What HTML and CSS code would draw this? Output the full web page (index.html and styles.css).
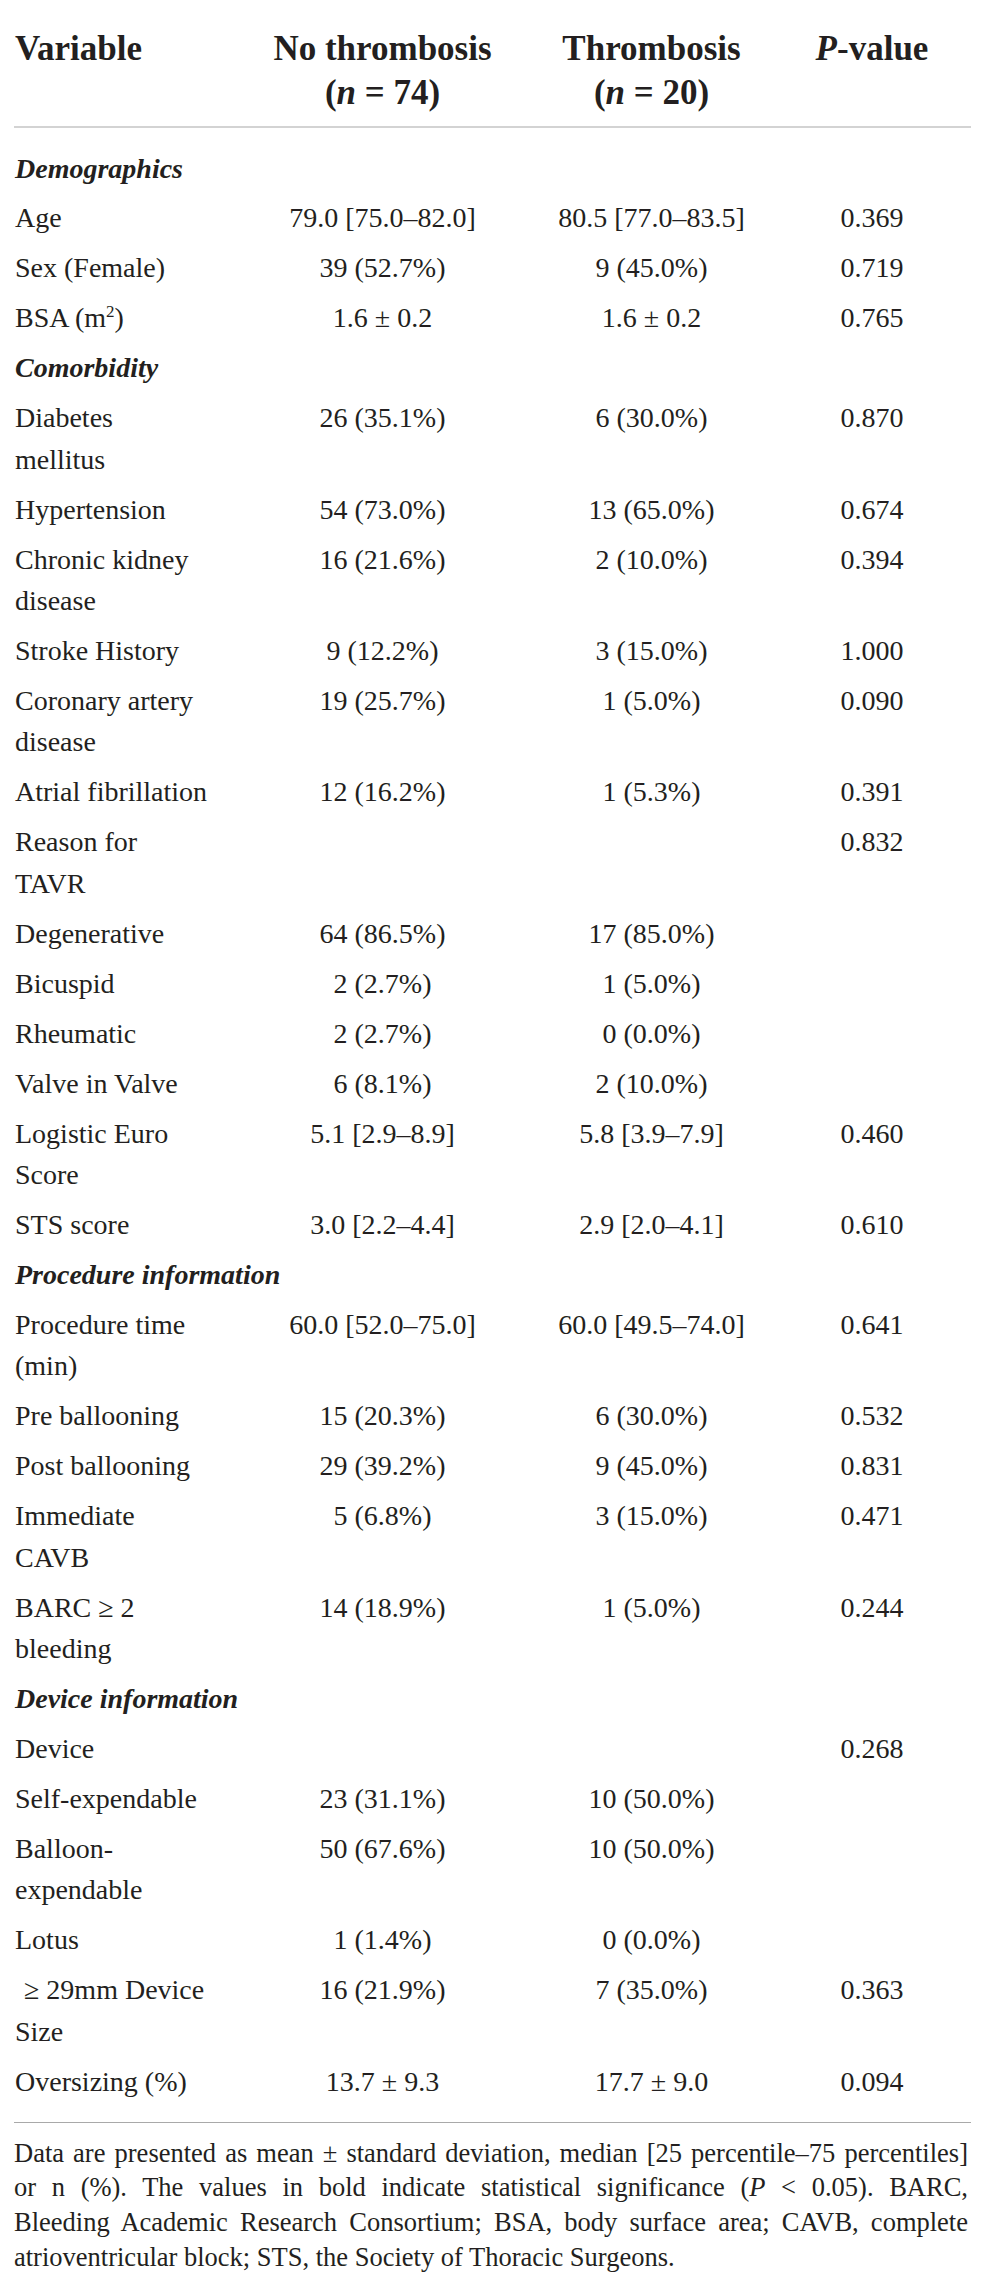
FILE: index.html
```html
<!DOCTYPE html>
<html>
<head>
    <meta charset="utf-8">
    <title>Thrombosis table</title>
    <link rel="stylesheet" href="styles.css">
</head>
<body>
    <div class="page">
        <table class="tabell">
            <colgroup>
                <col class="c1"><col class="c2"><col class="c3"><col class="c4">
            </colgroup>
            <thead>
                <tr>
                    <th class="venstre">Variable</th>
                    <th>No thrombosis<br>(<i>n</i> = 74)</th>
                    <th>Thrombosis<br>(<i>n</i> = 20)</th>
                    <th><i>P</i>-value</th>
                </tr>
            </thead>
            <tbody>
                <tr class="seksjon"><td colspan="4">Demographics</td></tr>
                <tr><td>Age</td><td>79.0 [75.0–82.0]</td><td>80.5 [77.0–83.5]</td><td>0.369</td></tr>
                <tr><td>Sex (Female)</td><td>39 (52.7%)</td><td>9 (45.0%)</td><td>0.719</td></tr>
                <tr><td>BSA (m<sup>2</sup>)</td><td>1.6 ± 0.2</td><td>1.6 ± 0.2</td><td>0.765</td></tr>
                <tr class="seksjon"><td colspan="4">Comorbidity</td></tr>
                <tr><td>Diabetes<br>mellitus</td><td>26 (35.1%)</td><td>6 (30.0%)</td><td>0.870</td></tr>
                <tr><td>Hypertension</td><td>54 (73.0%)</td><td>13 (65.0%)</td><td>0.674</td></tr>
                <tr><td>Chronic kidney<br>disease</td><td>16 (21.6%)</td><td>2 (10.0%)</td><td>0.394</td></tr>
                <tr><td>Stroke History</td><td>9 (12.2%)</td><td>3 (15.0%)</td><td>1.000</td></tr>
                <tr><td>Coronary artery<br>disease</td><td>19 (25.7%)</td><td>1 (5.0%)</td><td>0.090</td></tr>
                <tr><td>Atrial fibrillation</td><td>12 (16.2%)</td><td>1 (5.3%)</td><td>0.391</td></tr>
                <tr><td>Reason for<br>TAVR</td><td></td><td></td><td>0.832</td></tr>
                <tr><td>Degenerative</td><td>64 (86.5%)</td><td>17 (85.0%)</td><td></td></tr>
                <tr><td>Bicuspid</td><td>2 (2.7%)</td><td>1 (5.0%)</td><td></td></tr>
                <tr><td>Rheumatic</td><td>2 (2.7%)</td><td>0 (0.0%)</td><td></td></tr>
                <tr><td>Valve in Valve</td><td>6 (8.1%)</td><td>2 (10.0%)</td><td></td></tr>
                <tr><td>Logistic Euro<br>Score</td><td>5.1 [2.9–8.9]</td><td>5.8 [3.9–7.9]</td><td>0.460</td></tr>
                <tr><td>STS score</td><td>3.0 [2.2–4.4]</td><td>2.9 [2.0–4.1]</td><td>0.610</td></tr>
                <tr class="seksjon"><td colspan="4">Procedure information</td></tr>
                <tr><td>Procedure time<br>(min)</td><td>60.0 [52.0–75.0]</td><td>60.0 [49.5–74.0]</td><td>0.641</td></tr>
                <tr><td>Pre ballooning</td><td>15 (20.3%)</td><td>6 (30.0%)</td><td>0.532</td></tr>
                <tr><td>Post ballooning</td><td>29 (39.2%)</td><td>9 (45.0%)</td><td>0.831</td></tr>
                <tr><td>Immediate<br>CAVB</td><td>5 (6.8%)</td><td>3 (15.0%)</td><td>0.471</td></tr>
                <tr><td>BARC ≥ 2<br>bleeding</td><td>14 (18.9%)</td><td>1 (5.0%)</td><td>0.244</td></tr>
                <tr class="seksjon"><td colspan="4">Device information</td></tr>
                <tr><td>Device</td><td></td><td></td><td>0.268</td></tr>
                <tr><td>Self-expendable</td><td>23 (31.1%)</td><td>10 (50.0%)</td><td></td></tr>
                <tr><td>Balloon-<br>expendable</td><td>50 (67.6%)</td><td>10 (50.0%)</td><td></td></tr>
                <tr><td>Lotus</td><td>1 (1.4%)</td><td>0 (0.0%)</td><td></td></tr>
                <tr><td><span class="innrykk">≥ 29mm Device</span><br>Size</td><td>16 (21.9%)</td><td>7 (35.0%)</td><td>0.363</td></tr>
                <tr><td>Oversizing (%)</td><td>13.7 ± 9.3</td><td>17.7 ± 9.0</td><td>0.094</td></tr>
            </tbody>
        </table>

        <!-- Fotnoten under tabellen -->
        <p class="fotnote">
            <span class="linje">Data are presented as mean ± standard deviation, median [25 percentile–75 percentiles]</span>
            <span class="linje">or n (%). The values in bold indicate statistical significance (<i>P</i> &lt; 0.05). BARC,</span>
            <span class="linje">Bleeding Academic Research Consortium; BSA, body surface area; CAVB, complete</span>
            <span class="linje siste">atrioventricular block; STS, the Society of Thoracic Surgeons.</span>
        </p>
    </div>
</body>
</html>
```

FILE: styles.css
```css
/* Hele siden: hvit bakgrunn og serif-skrift */
body {
    margin: 0;
    background-color: #fff;
    color: #231f20;
    font-family: "Liberation Serif", "DejaVu Serif", serif;
}

.page {
    width: 957px;
    padding: 27px 0 0 14px;
}

/* Tabellen */
.tabell {
    width: 957px;
    border-collapse: collapse;
    table-layout: fixed;
}
.c1 { width: 221px; }
.c2 { width: 295px; }
.c3 { width: 243px; }
.c4 { width: 198px; }

.tabell th {
    font-size: 35px;
    line-height: 44px;
    font-weight: bold;
    text-align: center;
    vertical-align: top;
    padding: 0 0 11px 0;
    border-bottom: 2px solid #d3d3d3;
}
.tabell th.venstre {
    text-align: left;
    padding-left: 1px;
}

.tabell td {
    font-size: 28px;
    line-height: 41.5px;
    text-align: center;
    vertical-align: top;
    padding: 4.22px 0;
}
.tabell td:first-child {
    text-align: left;
    padding-left: 1px;
}

/* Luft over første og under siste rad */
.tabell tbody tr:first-child td {
    padding-top: 19.5px;
}
.tabell tbody tr:last-child td {
    padding-bottom: 19.5px;
    border-bottom: 1px solid #a9a9a9;
}

.seksjon td {
    font-weight: bold;
    font-style: italic;
}

.innrykk {
    padding-left: 9px;
}

sup {
    font-size: 17px;
    line-height: 0;
}

/* Fotnoten */
.fotnote {
    margin: 13px 0 0 0;
    width: 954px;
    font-size: 26.5px;
    line-height: 34.7px;
}
.linje {
    display: block;
    white-space: nowrap;
    text-align: justify;
    text-align-last: justify;
}
.linje.siste {
    text-align-last: left;
}
```
